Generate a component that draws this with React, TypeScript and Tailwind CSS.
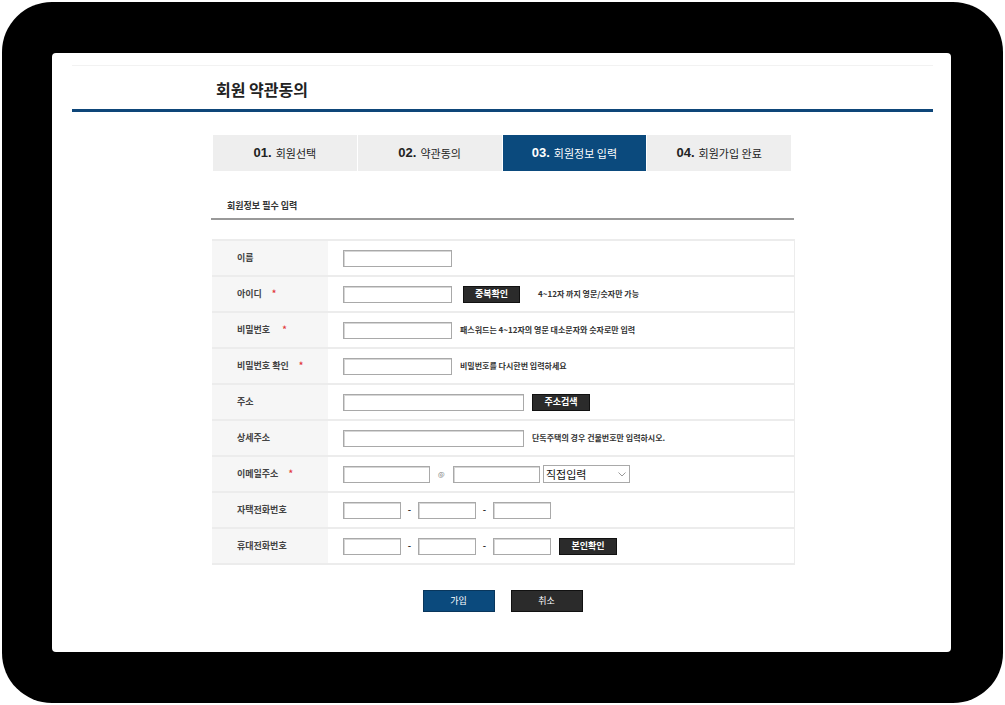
const font = { fontFamily: '"Noto Sans CJK KR", "Noto Sans", sans-serif' };

const steps = [
  { no: "01.", label: "회원선택" },
  { no: "02.", label: "약관동의" },
  { no: "03.", label: "회원정보 입력", active: true },
  { no: "04.", label: "회원가입 완료" },
];

const Input = ({ w }: { w: string }) => (
  <div className={`${w} h-[17px] border border-[#a9a9a9] bg-white shadow-[inset_1px_1px_0_#d6d6d6]`} />
);

const DarkBtn = ({ children, w }: { children: string; w: string }) => (
  <div className={`${w} h-[17px] bg-[#2b2b2b] border border-[#111] text-white text-[9px] font-bold flex items-center justify-center`}>
    {children}
  </div>
);

const Star = () => <span className="text-[#e23a3a] text-[9px] ml-[10px]">*</span>;

const Row = ({ label, star, pad, children }: { label: string; star?: boolean; pad?: string; children?: React.ReactNode }) => (
  <div className="flex h-[36px] border-b-2 border-[#ececec]">
    <div className="w-[116px] bg-[#f6f6f6] flex items-center pl-[25px] text-[9px] font-bold text-[#444]">
      <span className={pad}>{label}</span>
      {star && <Star />}
    </div>
    <div className="flex-1 flex items-center pl-[15px] gap-[8px] text-[8px] font-bold text-[#333]">
      {children}
    </div>
  </div>
);

const Dash = () => <span className="w-[9px] -mx-[4px] text-center text-[9px]">-</span>;

export default function App() {
  return (
    <div className="w-[1005px] h-[705px] bg-white p-[2px]" style={font}>
      <div className="w-full h-full bg-black rounded-[50px] pt-[51px] pl-[50px] pr-[50px]">
        <div className="w-[899px] h-[599px] bg-white rounded-[4px] pt-[12px] pl-[20px] pr-[18px]">
          <div className="border-t border-[#f2f2f2]">
            <div className="h-[43px] flex items-center pl-[144px] pt-[2px] text-[16px] font-bold text-[#222]">
              회원 약관동의
            </div>
            <div className="h-[3px] bg-[#0e4679]" />
          </div>

          <div className="w-[578px] ml-[141px] mt-[23px]">
            <div className="flex h-[36px] gap-px bg-white">
              {steps.map((s) => (
                <div
                  key={s.no}
                  className={`flex-1 flex items-center justify-center gap-[4px] ${s.active ? "bg-[#0b4a7d] text-white" : "bg-[#eeeeee] text-[#222]"}`}
                >
                  <span className="text-[13px] font-bold" style={{ fontFamily: '"Liberation Sans", Arial, sans-serif' }}>{s.no}</span>
                  <span className="text-[11px]">{s.label}</span>
                </div>
              ))}
            </div>

            <div className="mt-[28px] pl-[14px] text-[9px] font-bold text-[#333] h-[14px] leading-[14px]">회원정보 필수 입력</div>
            <div className="mt-[5px] h-[2px] bg-[#999] -ml-[2px] w-[583px]" />
          </div>

          <div className="w-[583px] ml-[140px] mt-[19px] border-t-2 border-[#ececec] border-r border-[#ececec]">
            <Row label="이름">
              <Input w="w-[109px]" />
            </Row>
            <Row label="아이디" star>
              <Input w="w-[109px]" />
              <div className="ml-[3px]"><DarkBtn w="w-[57px]">중복확인</DarkBtn></div>
              <span className="ml-[10px]">4~12자 까지 영문/숫자만 가능</span>
            </Row>
            <Row label="비밀번호" star pad="mr-[2px]">
              <Input w="w-[109px]" />
              <span>패스워드는 4~12자의 영문 대소문자와 숫자로만 입력</span>
            </Row>
            <Row label="비밀번호 확인" star>
              <Input w="w-[109px]" />
              <span>비밀번호를 다시한번 입력하세요</span>
            </Row>
            <Row label="주소">
              <Input w="w-[181px]" />
              <DarkBtn w="w-[58px]">주소검색</DarkBtn>
            </Row>
            <Row label="상세주소">
              <Input w="w-[181px]" />
              <span>단독주택의 경우 건물번호만 입력하시오.</span>
            </Row>
            <Row label="이메일주소" star>
              <Input w="w-[87px]" />
              <span className="text-[7px] font-normal text-[#777] w-[7px]">@</span>
              <Input w="w-[87px]" />
              <div className="-ml-[5px] w-[87px] h-[18px] border border-[#a9a9a9] bg-white flex items-center justify-between px-[2px] text-[11px] font-normal text-[#111]">
                <span>직접입력</span>
                <svg width="8" height="5" viewBox="0 0 8 5" className="mr-[1px]">
                  <path d="M0.5 0.5 L4 4 L7.5 0.5" fill="none" stroke="#999" strokeWidth="1" />
                </svg>
              </div>
            </Row>
            <Row label="자택전화번호">
              <Input w="w-[58px]" />
              <Dash />
              <Input w="w-[58px]" />
              <Dash />
              <Input w="w-[58px]" />
            </Row>
            <Row label="휴대전화번호">
              <Input w="w-[58px]" />
              <Dash />
              <Input w="w-[58px]" />
              <Dash />
              <Input w="w-[58px]" />
              <DarkBtn w="w-[58px]">본인확인</DarkBtn>
            </Row>
          </div>

          <div className="flex justify-center gap-[16px] mt-[25px]">
            <div className="w-[72px] h-[22px] bg-[#0b4a7d] border border-[#09365c] text-white text-[9px] flex items-center justify-center">가입</div>
            <div className="w-[72px] h-[22px] bg-[#2b2b2b] border border-[#111] text-white text-[9px] flex items-center justify-center">취소</div>
          </div>
        </div>
      </div>
    </div>
  );
}
